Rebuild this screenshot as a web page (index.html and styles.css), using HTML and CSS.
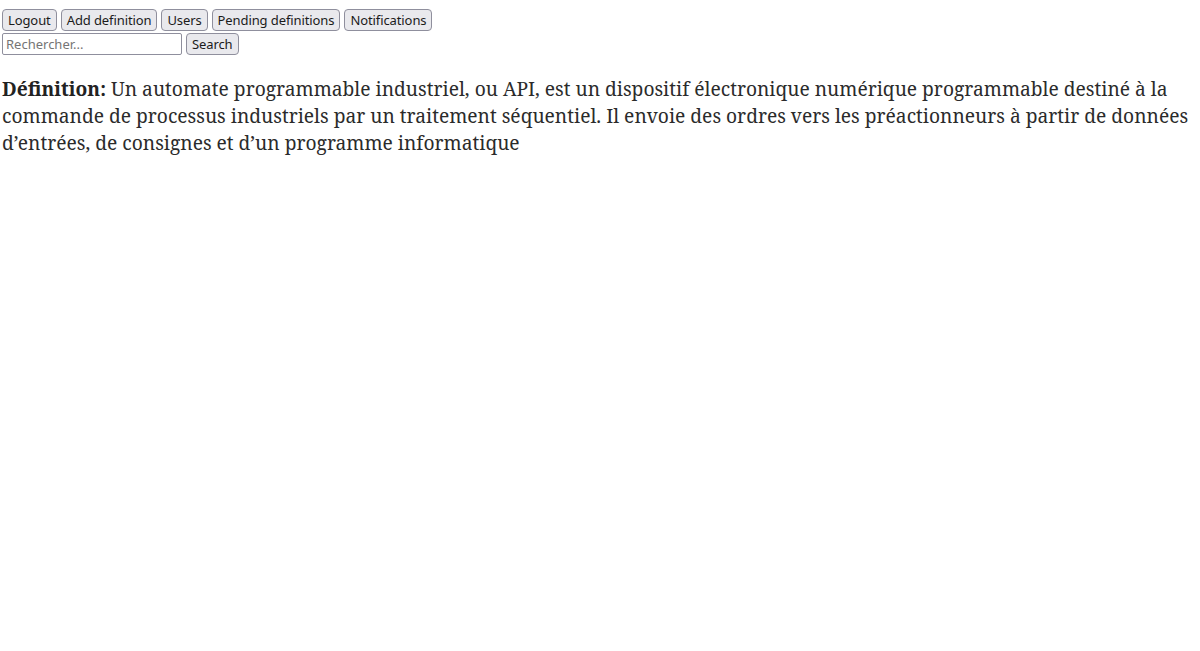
FILE: index.html
```html
<!DOCTYPE html>
<html lang="fr">
<head>
<meta charset="utf-8">
<title>Définitions</title>
<link rel="stylesheet" href="styles.css">
</head>
<body>
<nav class="nav">
  <button class="btn">Logout</button>
  <button class="btn">Add definition</button>
  <button class="btn">Users</button>
  <button class="btn">Pending definitions</button>
  <button class="btn">Notifications</button>
</nav>
<form class="search">
  <input class="search-input" type="text" placeholder="Rechercher...">
  <button class="btn" type="button">Search</button>
</form>
<p class="def"><strong>Définition:</strong> Un automate programmable industriel, ou API, est un dispositif électronique numérique programmable destiné à la commande de processus industriels par un traitement séquentiel. Il envoie des ordres vers les préactionneurs à partir de données d’entrées, de consignes et d’un programme informatique</p>
</body>
</html>
```
FILE: styles.css
```css
body {
  margin: 0 2px;
  font-family: "Noto Serif", "DejaVu Serif", serif;
  color: #2b2b2b;
}
.nav {
  display: flex;
  gap: 4px;
  padding-top: 9px;
}
.search {
  display: flex;
  gap: 4px;
  margin-top: 2px;
}
.btn {
  font-family: "Noto Sans", sans-serif;
  font-size: 13px;
  letter-spacing: -0.1px;
  color: #1b1b1b;
  background: #e9e9ed;
  border: 1px solid #8f8f9d;
  border-radius: 4px;
  height: 22px;
  padding: 0 5px;
  line-height: 18px;
}
.search-input {
  box-sizing: border-box;
  width: 180px;
  height: 22px;
  margin: 0;
  padding: 0 3px;
  border: 1px solid #8f8f9d;
  border-radius: 2px;
  font-family: "Noto Sans", sans-serif;
  font-size: 13px;
  color: #1b1b1b;
}
.search-input::placeholder {
  color: #757575;
}
.def {
  margin: 20px 0;
  font-size: 19.2px;
  line-height: 27px;
}
.def strong {
  color: #222;
}
```
